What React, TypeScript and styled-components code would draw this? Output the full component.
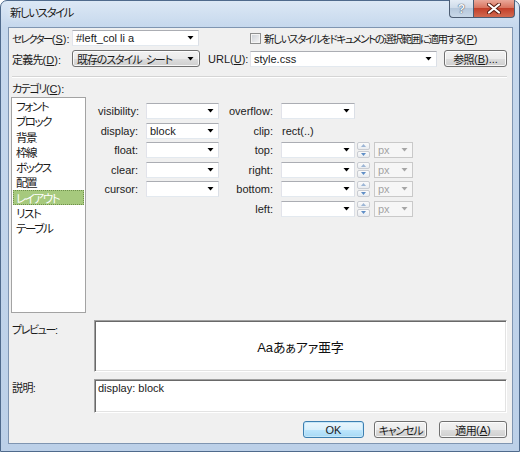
import React from "react";
import styled, { createGlobalStyle, css } from "styled-components";

const GlobalStyle = createGlobalStyle`
  html, body {
    margin: 0;
    padding: 0;
  }
  body {
    font-family: "Liberation Sans", "Noto Sans CJK JP", sans-serif;
    font-size: 11px;
    color: #1a1a1a;
    font-feature-settings: "palt";
  }
  * {
    box-sizing: border-box;
  }
`;

// Japanese runs: the reference font (MS UI Gothic) is far narrower than Noto CJK
const Jp = styled.span<{ $size?: number; $ls?: number }>`
  font-family: "Noto Sans CJK JP", sans-serif;
  font-size: ${(p) => p.$size ?? 11}px;
  letter-spacing: ${(p) => p.$ls ?? -1.4}px;
`;

const Window = styled.div`
  width: 520px;
  height: 452px;
  display: flex;
  flex-direction: column;
  background: linear-gradient(180deg, #dce8f5 0, #c6d8ed 26px, #bcd0e8 100%);
  border: 1px solid #4f6a8c;
  border-radius: 7px 7px 0 0;
  padding: 0 6px 7px 7px;
`;

const TitleBar = styled.div`
  height: 26px;
  display: flex;
  justify-content: space-between;
  align-items: flex-start;
`;

const Title = styled.div`
  padding: 3px 0 0 2px;
  text-shadow: 0 0 6px rgba(255, 255, 255, 0.9);
`;

const CaptionButtons = styled.div`
  display: flex;
  margin: -1px -2px 0 0;
`;

const CaptionButton = styled.div<{ $kind: "help" | "close" }>`
  height: 18px;
  display: flex;
  align-items: center;
  justify-content: center;
  border: 1px solid #4d5d73;
  border-top: none;
  ${(p) =>
    p.$kind === "help"
      ? css`
          width: 24px;
          border-right: none;
          border-radius: 0 0 0 4px;
          background: linear-gradient(180deg, #e4ecf5 0, #cfdcea 45%, #b6c8dc 50%, #c9d8e8 100%);
          color: #f4f7fb;
          font: bold 12px "Liberation Sans", sans-serif;
          text-shadow: 0 0 1px #3e4b5c, 0 0 1px #3e4b5c;
        `
      : css`
          width: 42px;
          border-radius: 0 0 4px 0;
          background: linear-gradient(180deg, #eaa899 0, #d9745f 45%, #c3402a 50%, #d26a50 100%);
        `}
`;

const Client = styled.div`
  flex: 1;
  display: flex;
  flex-direction: column;
  background: #f0f0f0;
  border: 1px solid #7f95b1;
  padding: 2px 5px 5px 3px;
`;

const Row = styled.div<{ $h: number; $mt?: number }>`
  display: flex;
  align-items: center;
  height: ${(p) => p.$h}px;
  margin-top: ${(p) => p.$mt ?? 0}px;
  flex-shrink: 0;
`;

const Label = styled.span<{ $w?: number; $ml?: number }>`
  width: ${(p) => (p.$w ? `${p.$w}px` : "auto")};
  margin-left: ${(p) => p.$ml ?? 0}px;
  flex-shrink: 0;
  white-space: nowrap;
`;

const Acc = styled.span`
  text-decoration: underline;
  text-underline-offset: 1px;
`;

const Arrow = ({ color = "#000" }: { color?: string }) => (
  <svg width="7" height="4" viewBox="0 0 7 4">
    <path d="M0.5 0h6L3.5 3.5z" fill={color} />
  </svg>
);

const Combo = styled.div<{ $w?: number }>`
  width: ${(p) => (p.$w ? `${p.$w}px` : "100%")};
  height: 16px;
  flex-shrink: 0;
  display: flex;
  align-items: center;
  justify-content: space-between;
  background: #fff;
  border: 1px solid;
  border-color: #abadb3 #dbdfe6 #e3e9ef #e2e3ea;
  padding: 0 4px 0 3px;
  white-space: nowrap;
`;

const ButtonFace = css`
  border: 1px solid #707070;
  border-radius: 3px;
  background: linear-gradient(180deg, #f2f2f2 0, #ebebeb 50%, #dddddd 51%, #cfcfcf 100%);
  box-shadow: inset 0 0 0 1px rgba(255, 255, 255, 0.8);
`;

const SelectButton = styled.div<{ $w: number }>`
  ${ButtonFace}
  width: ${(p) => p.$w}px;
  height: 17px;
  flex-shrink: 0;
  display: flex;
  align-items: center;
  justify-content: space-between;
  padding: 0 5px 0 4px;
  white-space: nowrap;
`;

const PushButton = styled.div<{ $w: number; $ml?: number; $default?: boolean }>`
  ${ButtonFace}
  width: ${(p) => p.$w}px;
  height: 17px;
  margin-left: ${(p) => p.$ml ?? 0}px;
  flex-shrink: 0;
  display: flex;
  align-items: center;
  justify-content: center;
  white-space: nowrap;
  ${(p) =>
    p.$default &&
    css`
      border-color: #3c7fb1;
      background: linear-gradient(180deg, #eaf6fd 0, #d9f0fc 50%, #bee6fd 51%, #a7d9f5 100%);
      box-shadow: inset 0 0 0 1px #c5e7f9;
    `}
`;

const CheckBox = styled.span`
  width: 11px;
  height: 11px;
  margin: 0 3px 0 51px;
  flex-shrink: 0;
  border: 1px solid #8e8f8f;
  background: linear-gradient(135deg, #cbcfd5 0, #f6f6f6 100%);
  box-shadow: inset 0 0 0 1px #f4f4f4;
`;

const Separator = styled.div`
  margin-top: 9px;
  height: 2px;
  flex-shrink: 0;
  border-top: 1px solid #d5d5d5;
  border-bottom: 1px solid #fff;
`;

const CategoryLabel = styled.div`
  margin-top: 4px;
  height: 13px;
  line-height: 13px;
  flex-shrink: 0;
`;

const Main = styled.div`
  margin-top: 2px;
  display: flex;
  align-items: flex-start;
  height: 216px;
  flex-shrink: 0;
`;

const ListBox = styled.div`
  width: 75px;
  height: 216px;
  margin-left: -1px;
  background: #fff;
  border: 1px solid #a3a3a3;
  padding: 0 1px;
  display: flex;
  flex-direction: column;
`;

const ListItem = styled.div<{ $selected?: boolean }>`
  height: 15.3px;
  line-height: 14px;
  padding-left: 2px;
  white-space: nowrap;
  font-family: "Noto Sans CJK JP", sans-serif;
  font-size: 11.5px;
  letter-spacing: -1.4px;
  border: 1px dotted transparent;
  ${(p) =>
    p.$selected &&
    css`
      background: #a6c97d;
      color: #fff;
      border-color: #6e8f4a;
    `}
`;

const PropGrid = styled.div`
  margin: 6px 0 0 12px;
  display: grid;
  grid-template-columns: 48px 73px 62px 74px 19px 39px;
  grid-auto-rows: 16px;
  row-gap: 3.5px;
  align-items: center;
`;

const PropLabel = styled.span`
  text-align: right;
  padding-right: 8px;
  white-space: nowrap;
  color: #222;
`;

const PropText = styled.span`
  padding-left: 1px;
  color: #222;
`;

const Spinner = styled.div`
  width: 13px;
  height: 16px;
  margin-left: 2px;
  display: flex;
  flex-direction: column;
  gap: 1px;
`;

const SpinHalf = styled.div`
  flex: 1;
  display: flex;
  align-items: center;
  justify-content: center;
  border: 1px solid #c9ccd2;
  border-radius: 2px;
  background: linear-gradient(180deg, #fbfbfb, #e9ecf0);
`;

const UnitBox = styled.div`
  width: 39px;
  height: 16px;
  display: flex;
  align-items: center;
  justify-content: space-between;
  padding: 0 4px 0 3px;
  background: #f6f6f6;
  border: 1px solid #c9c9c9;
  color: #a3a3a3;
`;

const BottomRow = styled.div<{ $h: number; $mt: number }>`
  display: flex;
  align-items: flex-start;
  height: ${(p) => p.$h}px;
  margin-top: ${(p) => p.$mt}px;
  flex-shrink: 0;
`;

const SideLabel = styled.span<{ $pt: number }>`
  width: 82px;
  padding-top: ${(p) => p.$pt}px;
  flex-shrink: 0;
`;

const SunkenBox = styled.div<{ $center?: boolean }>`
  flex: 1;
  height: 100%;
  background: #fff;
  border: 1px solid;
  border-color: #a0a0a0 #fff #fff #a0a0a0;
  box-shadow: inset 1px 1px 0 #696969, inset -1px -1px 0 #e3e3e3;
  display: flex;
  ${(p) =>
    p.$center
      ? css`
          align-items: center;
          justify-content: center;
        `
      : css`
          align-items: flex-start;
          padding: 2px 3px;
        `}
`;

const PreviewText = styled.span`
  font-size: 13px;
  color: #111;
  letter-spacing: -0.2px;
`;

const ButtonBar = styled.div`
  margin-top: 8px;
  display: flex;
  justify-content: flex-end;
  flex-shrink: 0;
`;

const Cell = styled.span``;

const categories = ["フォント", "ブロック", "背景", "枠線", "ボックス", "配置", "レイアウト", "リスト", "テーブル"];

const SpinBox = () => (
  <Spinner>
    <SpinHalf>
      <svg width="5" height="3" viewBox="0 0 5 3">
        <path d="M0 3h5L2.5 0z" fill="#9db6d6" />
      </svg>
    </SpinHalf>
    <SpinHalf>
      <svg width="5" height="3" viewBox="0 0 5 3">
        <path d="M0 0h5L2.5 3z" fill="#5f8ec6" />
      </svg>
    </SpinHalf>
  </Spinner>
);

const Unit = () => (
  <UnitBox>
    px
    <Arrow color="#a6a6a6" />
  </UnitBox>
);

const EmptyCombo = () => (
  <Combo>
    <span />
    <Arrow />
  </Combo>
);

export default function App() {
  return (
    <>
      <GlobalStyle />
      <Window lang="ja">
        <TitleBar>
          <Title>
            <Jp $size={11.5} $ls={-1.5}>新しいスタイル</Jp>
          </Title>
          <CaptionButtons>
            <CaptionButton $kind="help">?</CaptionButton>
            <CaptionButton $kind="close">
              <svg width="14" height="11" viewBox="0 0 14 11">
                <path d="M2 1.5l10 8M12 1.5l-10 8" stroke="#5a1d12" strokeWidth="4" strokeLinecap="round" />
                <path d="M2 1.5l10 8M12 1.5l-10 8" stroke="#fff" strokeWidth="2.2" strokeLinecap="round" />
              </svg>
            </CaptionButton>
          </CaptionButtons>
        </TitleBar>

        <Client>
          <Row $h={16}>
            <Label $w={60}>
              <Jp $size={10.5} $ls={-1.6}>セレクター</Jp>(<Acc>S</Acc>):
            </Label>
            <Combo $w={127}>
              #left_col li a
              <Arrow />
            </Combo>
            <CheckBox />
            <Label>
              <Jp $size={10.5} $ls={-1.4}>
                新しいスタイルをドキュメントの選択範囲に適用する
              </Jp>
              (<Acc>P</Acc>)
            </Label>
          </Row>

          <Row $h={17} $mt={4}>
            <Label $w={60}>
              <Jp $ls={-0.8}>定義先</Jp>(<Acc>D</Acc>):
            </Label>
            <SelectButton $w={128}>
              <Jp $ls={-1.1}>既存のスタイル{"\u2002"}シート</Jp>
              <Arrow />
            </SelectButton>
            <Label $w={42} $ml={8}>
              URL(<Acc>U</Acc>):
            </Label>
            <Combo $w={187}>
              style.css
              <Arrow />
            </Combo>
            <PushButton $w={63} $ml={7}>
              <Jp $ls={-0.6}>参照</Jp>(<Acc>B</Acc>)...
            </PushButton>
          </Row>

          <Separator />

          <CategoryLabel>
            <Jp>カテゴリ</Jp>(<Acc>C</Acc>):
          </CategoryLabel>

          <Main>
            <ListBox>
              {categories.map((c) => (
                <ListItem key={c} $selected={c === "レイアウト"}>
                  {c}
                </ListItem>
              ))}
            </ListBox>

            <PropGrid>
              <PropLabel>visibility:</PropLabel>
              <EmptyCombo />
              <PropLabel>overflow:</PropLabel>
              <EmptyCombo />
              <Cell />
              <Cell />

              <PropLabel>display:</PropLabel>
              <Combo>
                block
                <Arrow />
              </Combo>
              <PropLabel>clip:</PropLabel>
              <PropText>rect(..)</PropText>
              <Cell />
              <Cell />

              {["float", "clear", "cursor"].map((left, i) => (
                <React.Fragment key={left}>
                  <PropLabel>{left}:</PropLabel>
                  <EmptyCombo />
                  <PropLabel>{["top", "right", "bottom"][i]}:</PropLabel>
                  <EmptyCombo />
                  <SpinBox />
                  <Unit />
                </React.Fragment>
              ))}

              <Cell />
              <Cell />
              <PropLabel>left:</PropLabel>
              <EmptyCombo />
              <SpinBox />
              <Unit />
            </PropGrid>
          </Main>

          <BottomRow $h={52} $mt={7}>
            <SideLabel $pt={1}>
              <Jp>プレビュー</Jp>:
            </SideLabel>
            <SunkenBox $center>
              <PreviewText>Aaあぁアァ亜字</PreviewText>
            </SunkenBox>
          </BottomRow>

          <BottomRow $h={34} $mt={7}>
            <SideLabel $pt={0}>
              <Jp $ls={-0.6}>説明</Jp>:
            </SideLabel>
            <SunkenBox>display: block</SunkenBox>
          </BottomRow>

          <ButtonBar>
            <PushButton $w={61} $default>
              OK
            </PushButton>
            <PushButton $w={53} $ml={10}>
              <Jp $ls={-1.2}>キャンセル</Jp>
            </PushButton>
            <PushButton $w={68} $ml={12}>
              <Jp $ls={-0.6}>適用</Jp>(<Acc>A</Acc>)
            </PushButton>
          </ButtonBar>
        </Client>
      </Window>
    </>
  );
}
